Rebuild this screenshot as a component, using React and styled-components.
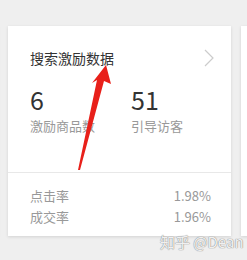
import React from 'react';
import styled, { createGlobalStyle } from 'styled-components';

const GlobalStyle = createGlobalStyle`
  html, body {
    margin: 0;
    padding: 0;
    background: #efefef;
    font-family: "Noto Sans CJK SC", "Noto Sans", sans-serif;
    overflow: hidden;
  }
`;

const Page = styled.div`
  position: relative;
  width: 247px;
  height: 260px;
  overflow: hidden;
`;

const Track = styled.div`
  display: flex;
  gap: 10px;
  padding-top: 26px;
  margin-left: -225px;
`;

const Card = styled.div`
  flex: 0 0 223px;
  height: 210px;
  background: #fff;
  box-shadow: 0 1px 3px rgba(0, 0, 0, 0.12);
  display: flex;
  flex-direction: column;
  box-sizing: border-box;
`;

const Top = styled.div`
  padding: 22px 16px 0 22px;
  height: 147px;
  box-sizing: border-box;
  border-bottom: 1px solid #e8e8e8;
`;

const Header = styled.div`
  display: flex;
  justify-content: space-between;
  align-items: center;
  height: 20px;
`;

const Title = styled.div`
  font-size: 14px;
  line-height: 20px;
  color: #333;
`;

const Stats = styled.div`
  display: grid;
  grid-template-columns: 101px 1fr;
  margin-top: 16px;
`;

const Number = styled.div`
  font-size: 25px;
  line-height: 30px;
  color: #333;
`;

const Label = styled.div`
  margin-top: 3px;
  font-size: 13px;
  line-height: 18px;
  color: #999;
  white-space: nowrap;
`;

const Bottom = styled.div`
  padding: 12px 20px 0 22px;
`;

const Row = styled.div`
  display: flex;
  justify-content: space-between;
  font-size: 13px;
  line-height: 21px;
  color: #999;
`;

const Arrow = styled.svg`
  position: absolute;
  left: 0;
  top: 0;
  pointer-events: none;
`;

const Watermark = styled.div`
  position: absolute;
  left: 160px;
  top: 231px;
  font-size: 15px;
  color: rgba(255, 255, 255, 0.9);
  text-shadow: 0 0 1px #888, 0 0 1px #888;
  white-space: nowrap;
`;

const Chevron = () => (
  <svg width="12" height="18" viewBox="0 0 12 18">
    <polyline points="2,1 10,9 2,17" fill="none" stroke="#ccc" strokeWidth="1.2" />
  </svg>
);

const StatCard = ({ title, stats, rows }) => (
  <Card>
    <Top>
      <Header>
        <Title>{title}</Title>
        <Chevron />
      </Header>
      <Stats>
        {stats.map((s) => (
          <div key={s.label}>
            <Number>{s.value}</Number>
            <Label>{s.label}</Label>
          </div>
        ))}
      </Stats>
    </Top>
    <Bottom>
      {rows.map((r) => (
        <Row key={r.label}>
          <span>{r.label}</span>
          <span>{r.value}</span>
        </Row>
      ))}
    </Bottom>
  </Card>
);

export default function App() {
  const data = {
    title: '搜索激励数据',
    stats: [
      { value: '6', label: '激励商品数' },
      { value: '51', label: '引导访客' },
    ],
    rows: [
      { label: '点击率', value: '1.98%' },
      { label: '成交率', value: '1.96%' },
    ],
  };
  return (
    <Page>
      <GlobalStyle />
      <Track>
        <Card />
        <StatCard {...data} />
        <Card />
      </Track>
      <Arrow width="247" height="260">
        <polygon
          points="106,65 111,84 104,81 80,170 78,170 97,80 92,83"
          fill="#e8201a"
        />
      </Arrow>
      <Watermark>知乎 @Dean</Watermark>
    </Page>
  );
}
